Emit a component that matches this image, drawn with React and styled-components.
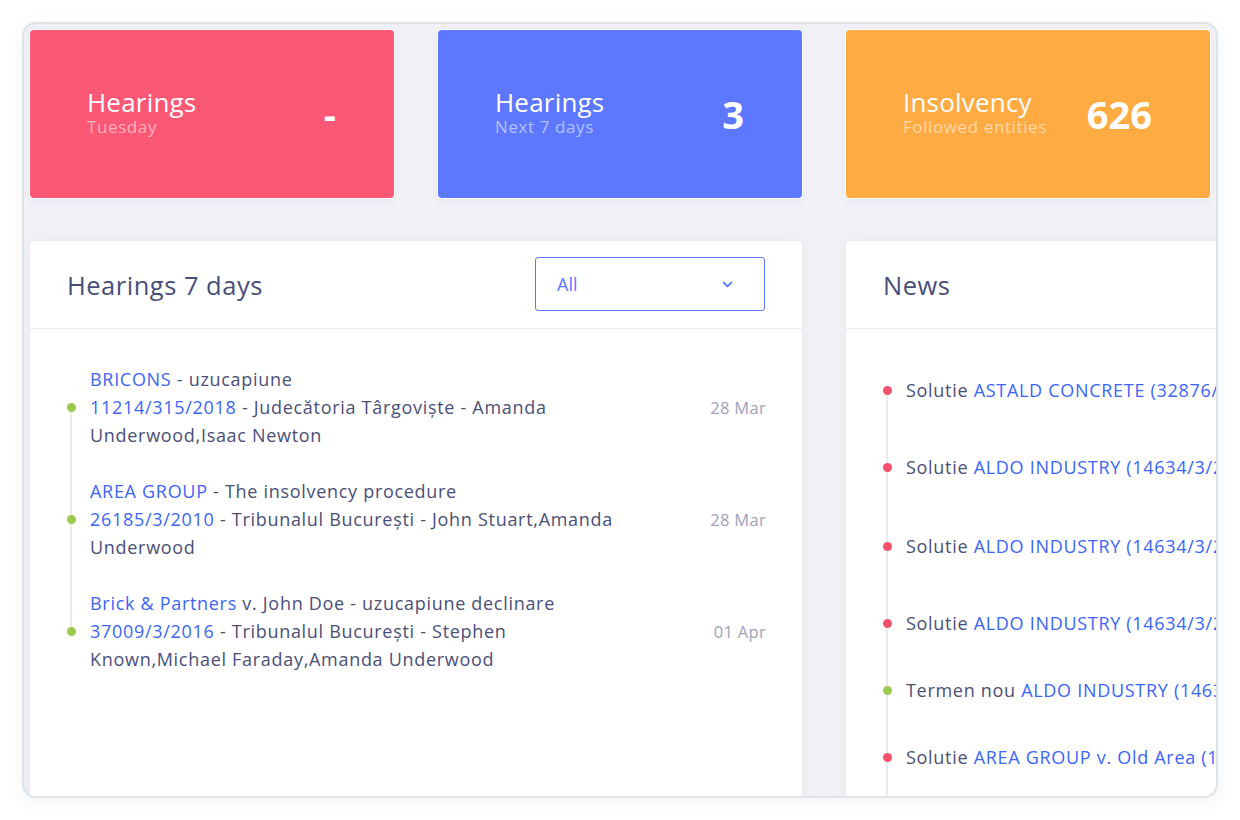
import React from "react";
import styled, { createGlobalStyle } from "styled-components";
import { ChevronDown } from "lucide-react";

const GlobalStyle = createGlobalStyle`
  html, body {
    margin: 0;
    padding: 0;
    background: #ffffff;
  }
  body {
    font-family: "Open Sans", "Noto Sans", sans-serif;
    -webkit-font-smoothing: antialiased;
  }
`;

const stats = [
  { color: "#fb5876", title: "Hearings", sub: "Tuesday", value: "-" },
  { color: "#5d78ff", title: "Hearings", sub: "Next 7 days", value: "3" },
  { color: "#ffab43", title: "Insolvency", sub: "Followed entities", value: "626" },
];

const hearings = [
  {
    link: "BRICONS",
    subject: " - uzucapiune",
    file: "11214/315/2018",
    rest: " - Judecătoria Târgoviște - Amanda Underwood,Isaac Newton",
    date: "28 Mar",
  },
  {
    link: "AREA GROUP",
    subject: " - The insolvency procedure",
    file: "26185/3/2010",
    rest: " - Tribunalul București - John Stuart,Amanda Underwood",
    date: "28 Mar",
  },
  {
    link: "Brick & Partners",
    subject: " v. John Doe - uzucapiune declinare",
    file: "37009/3/2016",
    rest: " - Tribunalul București - Stephen Known,Michael Faraday,Amanda Underwood",
    date: "01 Apr",
  },
];

const news = [
  { kind: "Solutie", link: "ASTALD CONCRETE (32876/3/2017)", tone: "red", gap: 49 },
  { kind: "Solutie", link: "ALDO INDUSTRY (14634/3/2016)", tone: "red", gap: 51 },
  { kind: "Solutie", link: "ALDO INDUSTRY (14634/3/2016)", tone: "red", gap: 49 },
  { kind: "Solutie", link: "ALDO INDUSTRY (14634/3/2016)", tone: "red", gap: 39 },
  { kind: "Termen nou", link: "ALDO INDUSTRY (14634/3/2016)", tone: "green", gap: 39 },
  { kind: "Solutie", link: "AREA GROUP v. Old Area (19455/3/2015)", tone: "red", gap: 39 },
];

function App() {
  return (
    <>
      <GlobalStyle />
      <Frame>
        <StatRow>
          {stats.map((s, i) => (
            <StatCard key={i} $color={s.color}>
              <StatText>
                <StatTitle>{s.title}</StatTitle>
                <StatSub>{s.sub}</StatSub>
              </StatText>
              <StatValue>{s.value}</StatValue>
            </StatCard>
          ))}
        </StatRow>

        <PanelRow>
          <Panel $width={772}>
            <PanelHead>
              <PanelTitle>Hearings 7 days</PanelTitle>
              <Select>
                <span>All</span>
                <ChevronDown size={15} strokeWidth={3.2} />
              </Select>
            </PanelHead>
            <HearingList>
              {hearings.map((h, i) => (
                <HearingItem key={i}>
                  <Dot $tone="green" />
                  <HearingText>
                    <Line>
                      <Link>{h.link}</Link>
                      {h.subject}
                    </Line>
                    <Line>
                      <Link>{h.file}</Link>
                      {h.rest}
                    </Line>
                  </HearingText>
                  <DateLabel>{h.date}</DateLabel>
                </HearingItem>
              ))}
            </HearingList>
          </Panel>

          <Panel $width={560}>
            <PanelHead>
              <PanelTitle>News</PanelTitle>
            </PanelHead>
            <NewsList>
              {news.map((n, i) => (
                <NewsItem key={i} $gap={n.gap}>
                  <Dot $tone={n.tone} />
                  <NewsText>
                    {n.kind} <Link>{n.link}</Link>
                  </NewsText>
                </NewsItem>
              ))}
            </NewsList>
          </Panel>
        </PanelRow>
      </Frame>
    </>
  );
}

// 바깥 프레임
const Frame = styled.div`
  box-sizing: border-box;
  margin: 22px;
  width: 1196px;
  height: 776px;
  padding: 6px 6px 0;
  border: 2px solid #dce4ea;
  border-radius: 14px;
  background: #f0f0f6;
  box-shadow: 0 4px 18px rgba(60, 70, 110, 0.06);
  overflow: hidden;
  display: flex;
  flex-direction: column;
`;

// 상단 통계 카드
const StatRow = styled.div`
  display: flex;
  gap: 44px;
`;

const StatCard = styled.div`
  box-sizing: border-box;
  width: 364px;
  height: 168px;
  padding: 0 58px 0 57px;
  border-radius: 4px;
  background: ${(p) => p.$color};
  box-shadow: 0 0 0 1px rgba(255, 255, 255, 0.8), 0 2px 10px rgba(80, 90, 140, 0.05);
  display: flex;
  align-items: center;
  justify-content: space-between;
  color: #ffffff;
`;

const StatText = styled.div`
  display: flex;
  flex-direction: column;
  margin-top: -2px;
`;

const StatTitle = styled.div`
  font-size: 26px;
  font-weight: 500;
  line-height: 28px;
  letter-spacing: 0.2px;
`;

const StatSub = styled.div`
  font-size: 17px;
  line-height: 22px;
  letter-spacing: 0.6px;
  color: rgba(255, 255, 255, 0.55);
`;

const StatValue = styled.div`
  font-size: 38px;
  font-weight: 700;
  line-height: 40px;
`;

// 하단 패널
const PanelRow = styled.div`
  flex: 1;
  margin-top: 43px;
  display: flex;
  gap: 44px;
`;

const Panel = styled.div`
  flex-shrink: 0;
  width: ${(p) => p.$width}px;
  border-radius: 4px 4px 0 0;
  background: #ffffff;
  box-shadow: 0 0 12px rgba(80, 90, 140, 0.04);
  display: flex;
  flex-direction: column;
`;

const PanelHead = styled.div`
  box-sizing: border-box;
  height: 88px;
  padding: 0 37px;
  border-bottom: 1px solid #ebedf3;
  display: flex;
  align-items: center;
  justify-content: space-between;
`;

const PanelTitle = styled.h3`
  margin: 0;
  font-size: 25.5px;
  font-weight: 400;
  letter-spacing: 0.5px;
  color: #474e78;
`;

const Select = styled.div`
  box-sizing: border-box;
  width: 230px;
  height: 54px;
  padding: 0 29px 0 21px;
  border: 1px solid #5d78ff;
  border-radius: 3px;
  display: flex;
  align-items: center;
  justify-content: space-between;
  font-size: 18px;
  color: #5d78ff;
  margin-top: -1px;
`;

const HearingList = styled.div`
  position: relative;
  padding: 36px 36px 0 37px;
  display: flex;
  flex-direction: column;
  gap: 28px;

  &::before {
    content: "";
    position: absolute;
    left: 40px;
    top: 78px;
    height: 223px;
    width: 2px;
    background: #e9ebf1;
  }
`;

const HearingItem = styled.div`
  position: relative;
  display: flex;
  align-items: center;
`;

const Dot = styled.span`
  flex-shrink: 0;
  width: 9px;
  height: 9px;
  border-radius: 50%;
  background: ${(p) => (p.$tone === "green" ? "#9ccb4c" : "#f4516c")};
  margin-right: 14px;
  position: relative;
`;

const HearingText = styled.div`
  width: 548px;
  font-size: 18px;
  line-height: 28px;
  letter-spacing: 0.7px;
  color: #4a4f78;
`;

const Line = styled.div``;

const Link = styled.span`
  color: #3b66f5;
`;

const DateLabel = styled.div`
  margin-left: auto;
  font-size: 16.5px;
  letter-spacing: 0.3px;
  color: #9ea1bb;
`;

const NewsList = styled.div`
  position: relative;
  flex: 1;
  padding: 47px 0 0 37px;

  &::before {
    content: "";
    position: absolute;
    left: 40px;
    top: 61px;
    bottom: 0;
    width: 2px;
    background: #e9ebf1;
  }
`;

const NewsItem = styled.div`
  display: flex;
  align-items: center;
  height: 28px;
  margin-bottom: ${(p) => p.$gap}px;
`;

const NewsText = styled.div`
  white-space: nowrap;
  font-size: 18px;
  line-height: 28px;
  letter-spacing: 0.7px;
  color: #4a4f78;
`;

export default App;
